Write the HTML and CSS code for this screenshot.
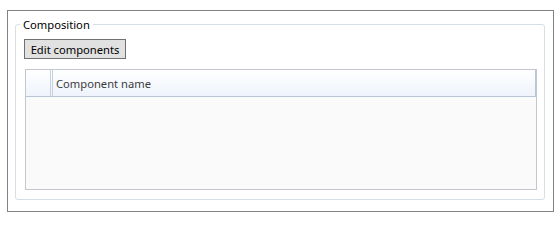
FILE: index.html
```html
<!DOCTYPE html>
<html>
<head>
<meta charset="utf-8">
<link rel="stylesheet" href="styles.css">
</head>
<body>
<div class="window">
  <fieldset class="group">
    <legend class="group-title">Composition</legend>
    <button class="btn" type="button">Edit components</button>
    <div class="grid">
      <div class="grid-header">
        <div class="row-head"></div>
        <div class="col-head">Component name</div>
      </div>
      <div class="grid-body"></div>
    </div>
  </fieldset>
</div>
</body>
</html>
```
FILE: styles.css
```css
html, body {
  margin: 0;
  padding: 0;
  background: #ffffff;
}
body {
  font-family: "Noto Sans", "Open Sans", sans-serif;
  font-size: 11.2px;
  color: #000;
}
.window {
  box-sizing: border-box;
  margin: 10px 0 0 7px;
  width: 547px;
  height: 202px;
  border: 1px solid #828282;
  padding: 6px 8px 11px 7px;
  display: flex;
}
.group {
  flex: 1;
  min-width: 0;
  margin: 0;
  border: 1px solid #d5dfe5;
  border-radius: 3px;
  padding: 7px 7px 9px 9px;
  display: flex;
  flex-direction: column;
}
.group-title {
  margin-left: -5px;
  padding: 0 3px;
  line-height: 15px;
  color: #000;
}
.btn {
  align-self: flex-start;
  box-sizing: border-box;
  width: 102px;
  height: 20px;
  margin: 0 0 10px -1px;
  padding: 0;
  border: 1px solid #707070;
  background: #e1e1e1;
  font: inherit;
  color: #000;
  line-height: 17px;
}
.grid {
  flex: 1;
  border: 1px solid #c3c8d0;
  background: #fafafa;
  display: flex;
  flex-direction: column;
}
.grid-header {
  display: flex;
  height: 26px;
  background: linear-gradient(#ffffff, #eef3fc);
  border-bottom: 1px solid #b9c6d3;
  border-right: 1px solid #b9c6d3;
}
.row-head {
  width: 24px;
  border-right: 1px solid #c8d2dc;
}
.col-head {
  flex: 1;
  margin-left: 1px;
  border-left: 1px solid #c8d2dc;
  padding-left: 3px;
  line-height: 27px;
  color: #3c3c3c;
}
.grid-body {
  flex: 1;
}
```
